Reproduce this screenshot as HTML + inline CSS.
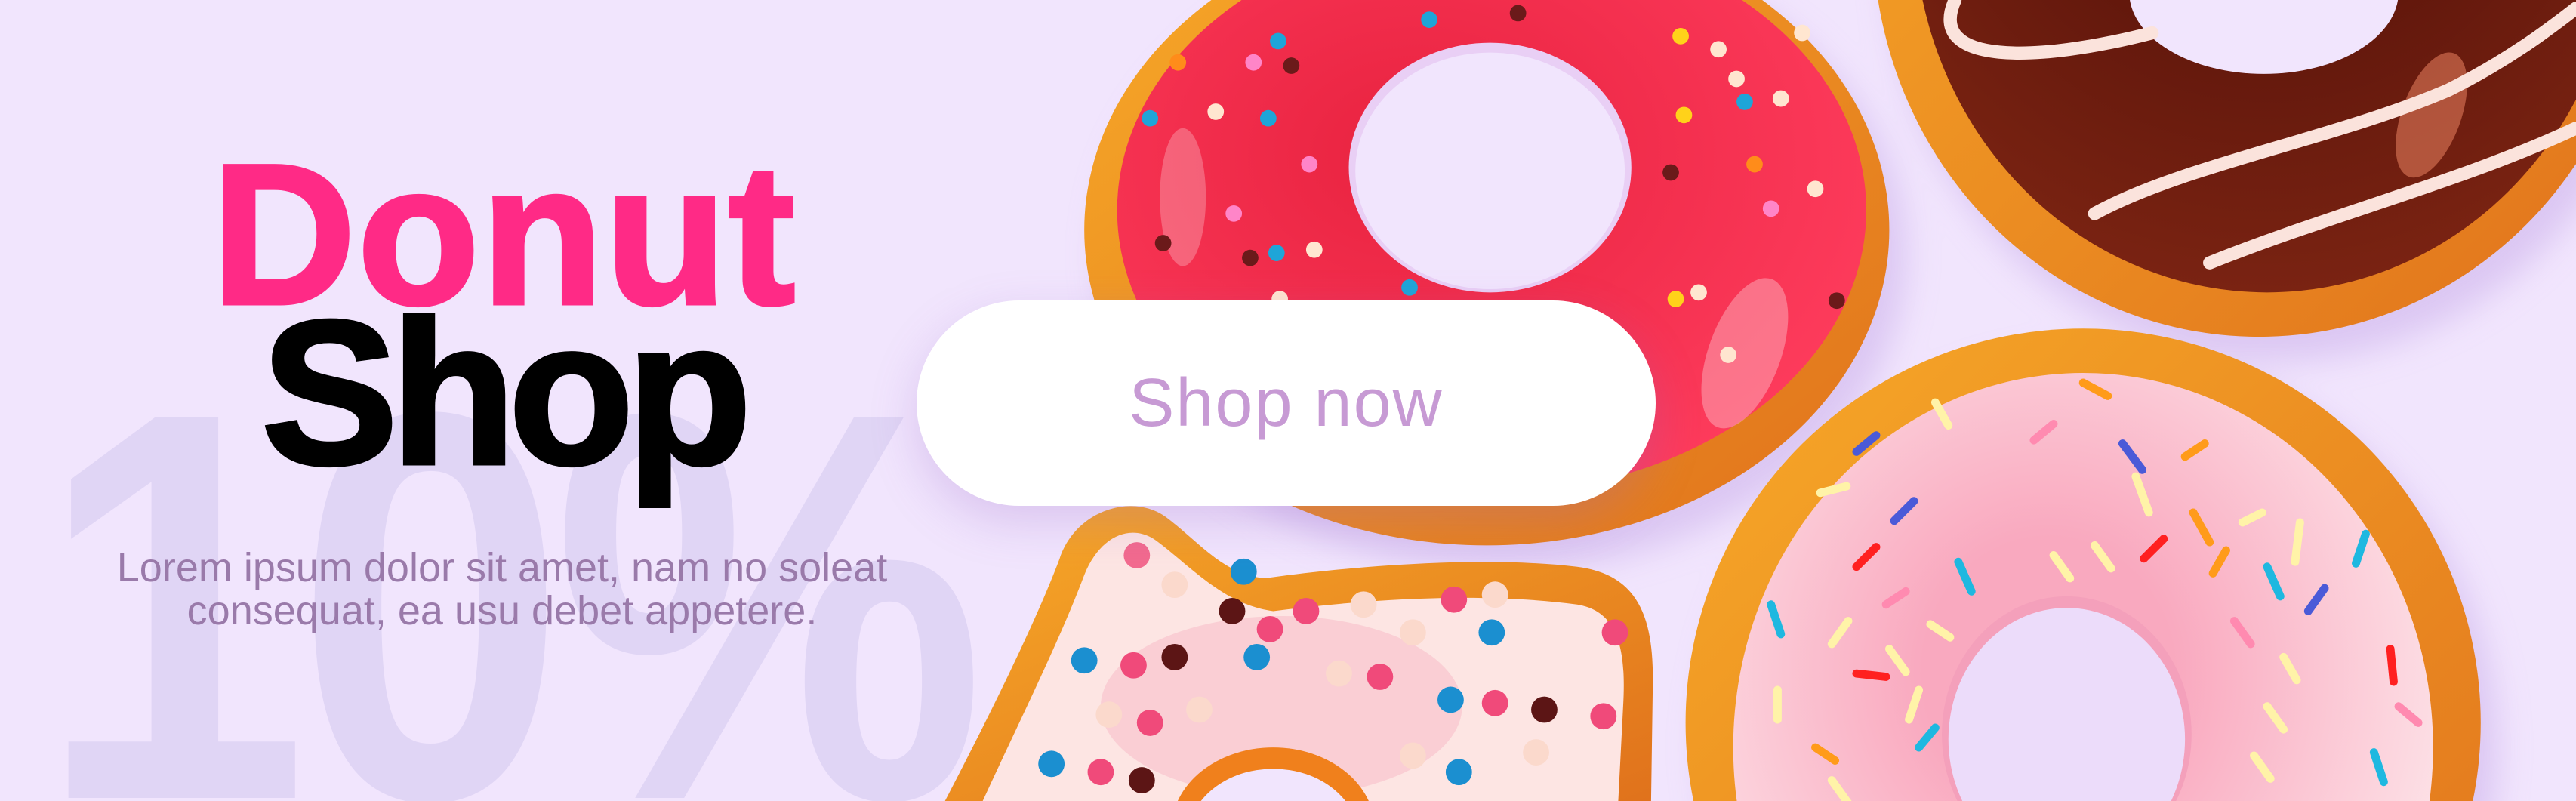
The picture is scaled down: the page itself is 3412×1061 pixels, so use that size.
<!DOCTYPE html>
<html><head><meta charset="utf-8"><style>
html,body{margin:0;padding:0;width:3412px;height:1061px;overflow:hidden}
body{background:#f1e5fd;position:relative;font-family:"Liberation Sans",sans-serif}
#wrap{position:absolute;left:0;top:0;width:3412px;height:1061px;overflow:hidden}
.t{position:absolute;white-space:nowrap;line-height:1;font-weight:bold}
#ten{left:50px;top:604px;font-size:733px;line-height:400px;color:#e0d5f5;letter-spacing:-20px;transform:scaleX(0.88);transform-origin:0 0}
#donut{left:280px;top:179px;font-size:265px;color:#ff2a86;letter-spacing:2px;-webkit-text-stroke:5px #ff2a86}
#shop{left:346px;top:384px;font-size:272px;color:#000;letter-spacing:-10px;-webkit-text-stroke:5px #000}
#lorem{position:absolute;left:115px;width:1100px;top:724px;text-align:center;font-size:54px;line-height:57px;color:#9a7aaa}
svg{position:absolute;left:0;top:0}
#btn{position:absolute;left:1214px;top:398px;width:979px;height:272px;border-radius:136px;background:#fff;box-shadow:0 22px 60px rgba(150,100,200,.25);text-align:center;line-height:272px;font-size:90px;color:#c79ad4;letter-spacing:2px}
</style></head><body><div id="wrap">
<div class="t" id="ten">10%</div>
<div class="t" id="donut">Donut</div>
<div class="t" id="shop">Shop</div>
<div id="lorem">Lorem ipsum dolor sit amet, nam no soleat<br>consequat, ea usu debet appetere.</div>
<svg width="3412" height="1061" viewBox="0 0 1568 487.6" preserveAspectRatio="none">
<defs>
<filter id="bl"><feGaussianBlur stdDeviation="10"/></filter>
<radialGradient id="rg" cx="0.4" cy="0.4" r="0.7"><stop offset="0" stop-color="#e8223f"/><stop offset="1" stop-color="#ff3d5e"/></radialGradient>
<radialGradient id="cg" cx="0.5" cy="0.3" r="0.7"><stop offset="0" stop-color="#4a0c06"/><stop offset="1" stop-color="#7a2312"/></radialGradient>
<radialGradient id="pg" cx="0.45" cy="0.4" r="0.6"><stop offset="0.3" stop-color="#f9a9bf"/><stop offset="1" stop-color="#fde3e8"/></radialGradient>
<linearGradient id="og" x1="0" y1="0" x2="1" y2="1"><stop offset="0" stop-color="#f7a928"/><stop offset="1" stop-color="#e0721c"/></linearGradient>
</defs>
<g filter="url(#bl)" fill="#d6bff0" opacity=".8">
<ellipse cx="915" cy="155" rx="245" ry="192"/>
<ellipse cx="1385" cy="-25" rx="235" ry="245"/>
<ellipse cx="1278" cy="455" rx="242" ry="240"/>
</g>
<ellipse cx="905" cy="140" rx="245" ry="192" fill="url(#og)"/>
<ellipse cx="908" cy="128" rx="228" ry="172" fill="url(#rg)"/>
<ellipse cx="720" cy="120" rx="14" ry="42" fill="#fff" opacity=".25"/>
<ellipse cx="1062" cy="215" rx="22" ry="48" fill="#fff" opacity=".3" transform="rotate(20 1062 215)"/>
<ellipse cx="907" cy="102" rx="86" ry="76" fill="#e9cff5"/>
<ellipse cx="907" cy="104" rx="82" ry="72" fill="#f1e5fd"/>
<g>
<circle cx="870" cy="12" r="5" fill="#1ea5d8"/><circle cx="924" cy="8" r="5" fill="#6b1a1a"/><circle cx="1023" cy="22" r="5" fill="#ffd21a"/><circle cx="1046" cy="30" r="5" fill="#ffe6d0"/><circle cx="1097" cy="20" r="5" fill="#ffe6d0"/><circle cx="778" cy="25" r="5" fill="#1ea5d8"/><circle cx="763" cy="38" r="5" fill="#ff85c8"/><circle cx="786" cy="40" r="5" fill="#6b1a1a"/><circle cx="717" cy="38" r="5" fill="#ff8c1a"/><circle cx="740" cy="68" r="5" fill="#ffe6d0"/><circle cx="700" cy="72" r="5" fill="#1ea5d8"/><circle cx="772" cy="72" r="5" fill="#1ea5d8"/><circle cx="797" cy="100" r="5" fill="#ff85c8"/><circle cx="751" cy="130" r="5" fill="#ff85c8"/><circle cx="708" cy="148" r="5" fill="#6b1a1a"/><circle cx="761" cy="157" r="5" fill="#6b1a1a"/><circle cx="777" cy="154" r="5" fill="#1ea5d8"/><circle cx="800" cy="152" r="5" fill="#ffe6d0"/><circle cx="1057" cy="48" r="5" fill="#ffe6d0"/><circle cx="1062" cy="62" r="5" fill="#1ea5d8"/><circle cx="1084" cy="60" r="5" fill="#ffe6d0"/><circle cx="1017" cy="105" r="5" fill="#6b1a1a"/><circle cx="1068" cy="100" r="5" fill="#ff8c1a"/><circle cx="1078" cy="127" r="5" fill="#ff85c8"/><circle cx="1105" cy="115" r="5" fill="#ffe6d0"/><circle cx="1034" cy="178" r="5" fill="#ffe6d0"/><circle cx="1020" cy="182" r="5" fill="#ffd21a"/><circle cx="1118" cy="183" r="5" fill="#6b1a1a"/><circle cx="1052" cy="216" r="5" fill="#ffe6d0"/><circle cx="858" cy="175" r="5" fill="#1ea5d8"/><circle cx="779" cy="182" r="5" fill="#ffe6d0"/><circle cx="1025" cy="70" r="5" fill="#ffd21a"/>
</g>
<ellipse cx="1375" cy="-40" rx="235" ry="245" fill="url(#og)"/>
<ellipse cx="1380" cy="-50" rx="215" ry="228" fill="url(#cg)"/>
<ellipse cx="1480" cy="70" rx="18" ry="40" fill="#e07a5a" opacity=".6" transform="rotate(20 1480 70)"/>
<ellipse cx="1378" cy="-5" rx="82" ry="50" fill="#f1e5fd"/>
<g fill="none" stroke="#fbe3dc" stroke-linecap="round" stroke-width="8">
<path d="M1190,0 C1172,40 1240,38 1310,20"/>
<path d="M1275,130 C1330,100 1420,85 1490,55 C1530,35 1555,15 1568,5"/>
<path d="M1345,160 C1420,130 1500,110 1568,78"/>
</g>
<path d="M575,488 C600,440 630,380 645,340 C655,310 690,300 710,315 C730,330 745,350 770,352 C820,345 900,338 960,345 C1000,350 1007,380 1006,420 L1005,488 Z" fill="url(#og)"/>
<path d="M598,488 C620,440 645,390 660,350 C670,325 690,318 705,330 C725,345 745,368 775,372 C830,365 900,360 960,368 C985,372 990,395 988,430 L985,488 Z" fill="#fde5e3"/>
<ellipse cx="780" cy="430" rx="110" ry="55" fill="#f7b8c6" opacity=".5"/>
<ellipse cx="775" cy="505" rx="62" ry="50" fill="#f0801c"/>
<ellipse cx="775" cy="510" rx="52" ry="42" fill="#f1e5fd"/>
<g>
<circle cx="692" cy="338" r="8" fill="#f26a8e"/><circle cx="757" cy="348" r="8" fill="#1b8fd0"/><circle cx="715" cy="356" r="8" fill="#fbd9cc"/><circle cx="660" cy="402" r="8" fill="#1b8fd0"/><circle cx="690" cy="405" r="8" fill="#f04a7a"/><circle cx="715" cy="400" r="8" fill="#5c1515"/><circle cx="750" cy="372" r="8" fill="#5c1515"/><circle cx="773" cy="383" r="8" fill="#f04a7a"/><circle cx="795" cy="372" r="8" fill="#f04a7a"/><circle cx="830" cy="368" r="8" fill="#fbd9cc"/><circle cx="885" cy="365" r="8" fill="#f04a7a"/><circle cx="910" cy="362" r="8" fill="#fbd9cc"/><circle cx="908" cy="385" r="8" fill="#1b8fd0"/><circle cx="983" cy="385" r="8" fill="#f04a7a"/><circle cx="860" cy="385" r="8" fill="#fbd9cc"/><circle cx="765" cy="400" r="8" fill="#1b8fd0"/><circle cx="815" cy="410" r="8" fill="#fbd9cc"/><circle cx="840" cy="412" r="8" fill="#f04a7a"/><circle cx="883" cy="426" r="8" fill="#1b8fd0"/><circle cx="940" cy="432" r="8" fill="#5c1515"/><circle cx="976" cy="436" r="8" fill="#f04a7a"/><circle cx="910" cy="428" r="8" fill="#f04a7a"/><circle cx="675" cy="435" r="8" fill="#fbd9cc"/><circle cx="700" cy="440" r="8" fill="#f04a7a"/><circle cx="640" cy="465" r="8" fill="#1b8fd0"/><circle cx="670" cy="470" r="8" fill="#f04a7a"/><circle cx="695" cy="475" r="8" fill="#5c1515"/><circle cx="860" cy="460" r="8" fill="#fbd9cc"/><circle cx="888" cy="470" r="8" fill="#1b8fd0"/><circle cx="935" cy="458" r="8" fill="#fbd9cc"/><circle cx="730" cy="432" r="8" fill="#fbd9cc"/>
</g>
<ellipse cx="1268" cy="440" rx="242" ry="240" fill="url(#og)"/>
<ellipse cx="1268" cy="455" rx="213" ry="228" fill="url(#pg)"/>
<ellipse cx="1258" cy="447" rx="76" ry="84" fill="#f4a0bb"/>
<ellipse cx="1258" cy="450" rx="72" ry="80" fill="#ecdcfa"/>
<g fill="none" stroke-linecap="round" stroke-width="5">
<path d="M1268,233 l15,8" stroke="#ff9b1a"/><path d="M1342,270 l-12,8" stroke="#ff9b1a"/><path d="M1178,245 l8,14" stroke="#fff3a8"/>
<path d="M1130,275 l12,-10" stroke="#4a5ad8"/><path d="M1238,268 l12,-10" stroke="#ff8ab0"/><path d="M1292,270 l12,16" stroke="#4a5ad8"/>
<path d="M1108,300 l16,-4" stroke="#fff3a8"/><path d="M1165,305 l-12,12" stroke="#4a5ad8"/><path d="M1300,290 l8,22" stroke="#fff3a8"/>
<path d="M1335,312 l10,18" stroke="#ff9b1a"/><path d="M1377,312 l-12,6" stroke="#fff3a8"/><path d="M1400,318 l-3,24" stroke="#fff3a8"/>
<path d="M1440,325 l-6,18" stroke="#1eb8e0"/><path d="M1130,345 l12,-12" stroke="#ff2020"/><path d="M1192,342 l8,18" stroke="#1eb8e0"/>
<path d="M1250,338 l10,14" stroke="#fff3a8"/><path d="M1275,332 l10,14" stroke="#fff3a8"/><path d="M1305,340 l12,-12" stroke="#ff2020"/>
<path d="M1355,335 l-8,14" stroke="#ff9b1a"/><path d="M1380,345 l8,18" stroke="#1eb8e0"/><path d="M1415,358 l-10,14" stroke="#4a5ad8"/>
<path d="M1078,368 l6,18" stroke="#1eb8e0"/><path d="M1125,378 l-10,14" stroke="#fff3a8"/><path d="M1160,360 l-12,8" stroke="#ff8ab0"/>
<path d="M1175,380 l12,8" stroke="#fff3a8"/><path d="M1150,395 l10,14" stroke="#fff3a8"/><path d="M1360,378 l10,14" stroke="#ff8ab0"/>
<path d="M1390,400 l8,14" stroke="#fff3a8"/><path d="M1455,395 l2,20" stroke="#ff2020"/><path d="M1130,410 l18,2" stroke="#ff2020"/>
<path d="M1082,420 l0,18" stroke="#fff3a8"/><path d="M1168,420 l-6,18" stroke="#fff3a8"/><path d="M1460,430 l12,10" stroke="#ff8ab0"/>
<path d="M1380,430 l10,14" stroke="#fff3a8"/><path d="M1168,455 l10,-12" stroke="#1eb8e0"/><path d="M1105,455 l12,8" stroke="#ff9b1a"/>
<path d="M1445,458 l6,18" stroke="#1eb8e0"/><path d="M1115,475 l10,14" stroke="#fff3a8"/><path d="M1372,460 l10,14" stroke="#fff3a8"/>
</g>
</svg>
<div id="btn">Shop now</div>
</div></body></html>
